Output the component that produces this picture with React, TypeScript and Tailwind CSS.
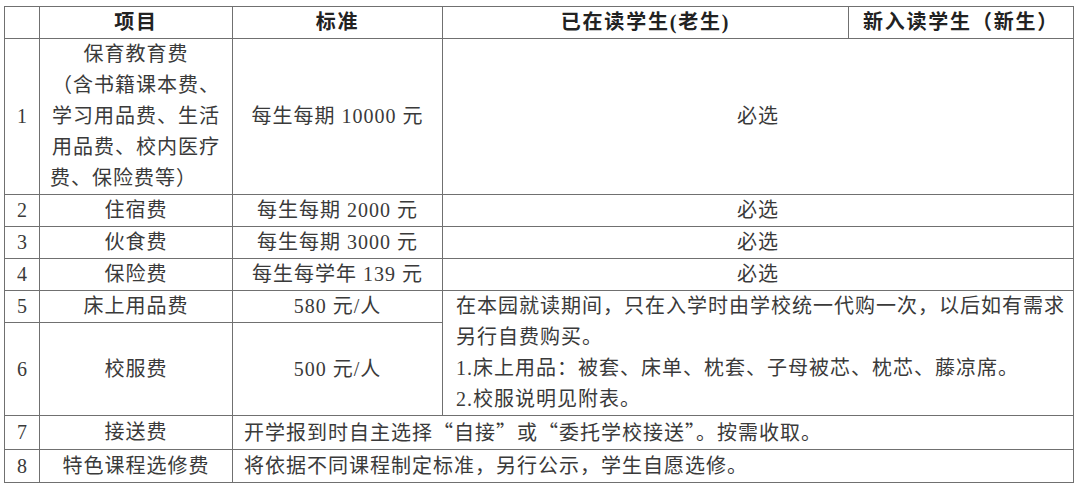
const FONT = "font-['Liberation_Serif','Noto_Sans_CJK_SC',serif]";

const cell = "border border-[#707070] p-0 align-middle";

const simpleRows = [
  { no: "2", item: "住宿费", std: "每生每期 2000 元" },
  { no: "3", item: "伙食费", std: "每生每期 3000 元" },
  { no: "4", item: "保险费", std: "每生每学年 139 元" },
];

// full-width curly quotes, like the SimSun original
const Q = ({ children }: { children: string }) => (
  <span className="font-['Noto_Sans_CJK_SC',sans-serif]">{children}</span>
);

export default function App() {
  return (
    <div className={`w-[1080px] h-[493px] bg-white pt-[6px] pl-[4px] ${FONT} text-[20px] leading-[31px] tracking-[1px] text-[#3a3a3a]`}>
      <table className="table-fixed border-collapse w-[1069px]">
        <colgroup>
          <col className="w-[35px]" />
          <col className="w-[193px]" />
          <col className="w-[210px]" />
          <col className="w-[406px]" />
          <col className="w-[225px]" />
        </colgroup>
        <thead>
          <tr className="h-[32px] font-bold text-[#222] tracking-[1.8px]">
            <th className={cell}></th>
            <th className={`${cell} text-center`}>项目</th>
            <th className={`${cell} text-center`}>标准</th>
            <th className={`${cell} text-center`}>已在读学生(老生)</th>
            <th className={`${cell} text-center`}>新入读学生（新生）</th>
          </tr>
        </thead>
        <tbody>
          <tr className="h-[155px]">
            <td className={`${cell} text-center tracking-normal`}>1</td>
            <td className={`${cell} text-center`}>
              <div>保育教育费</div>
              <div>（含书籍课本费、</div>
              <div>学习用品费、生活</div>
              <div>用品费、校内医疗</div>
              <div className="text-left pl-[10px]">费、保险费等）</div>
            </td>
            <td className={`${cell} text-center`}>每生每期 10000 元</td>
            <td className={`${cell} text-center`} colSpan={2}>必选</td>
          </tr>
          {simpleRows.map((r) => (
            <tr key={r.no} className="h-[32px]">
              <td className={`${cell} text-center tracking-normal`}>{r.no}</td>
              <td className={`${cell} text-center`}>{r.item}</td>
              <td className={`${cell} text-center`}>{r.std}</td>
              <td className={`${cell} text-center`} colSpan={2}>必选</td>
            </tr>
          ))}
          <tr className="h-[32px]">
            <td className={`${cell} text-center tracking-normal`}>5</td>
            <td className={`${cell} text-center`}>床上用品费</td>
            <td className={`${cell} text-center`}>580 元/人</td>
            <td className={`${cell} pl-[13px]`} colSpan={2} rowSpan={2}>
              <div>在本园就读期间，只在入学时由学校统一代购一次，以后如有需求</div>
              <div>另行自费购买。</div>
              <div>1.床上用品：被套、床单、枕套、子母被芯、枕芯、藤凉席。</div>
              <div>2.校服说明见附表。</div>
            </td>
          </tr>
          <tr className="h-[93px]">
            <td className={`${cell} text-center tracking-normal`}>6</td>
            <td className={`${cell} text-center`}>校服费</td>
            <td className={`${cell} text-center`}>500 元/人</td>
          </tr>
          <tr className="h-[33px]">
            <td className={`${cell} text-center tracking-normal`}>7</td>
            <td className={`${cell} text-center`}>接送费</td>
            <td className={`${cell} pl-[11px]`} colSpan={3}>
              开学报到时自主选择<Q>“</Q>自接<Q>”</Q>或<Q>“</Q>委托学校接送<Q>”</Q>。按需收取。
            </td>
          </tr>
          <tr className="h-[33px]">
            <td className={`${cell} text-center tracking-normal`}>8</td>
            <td className={`${cell} text-center`}>特色课程选修费</td>
            <td className={`${cell} pl-[11px]`} colSpan={3}>
              将依据不同课程制定标准，另行公示，学生自愿选修。
            </td>
          </tr>
        </tbody>
      </table>
    </div>
  );
}
